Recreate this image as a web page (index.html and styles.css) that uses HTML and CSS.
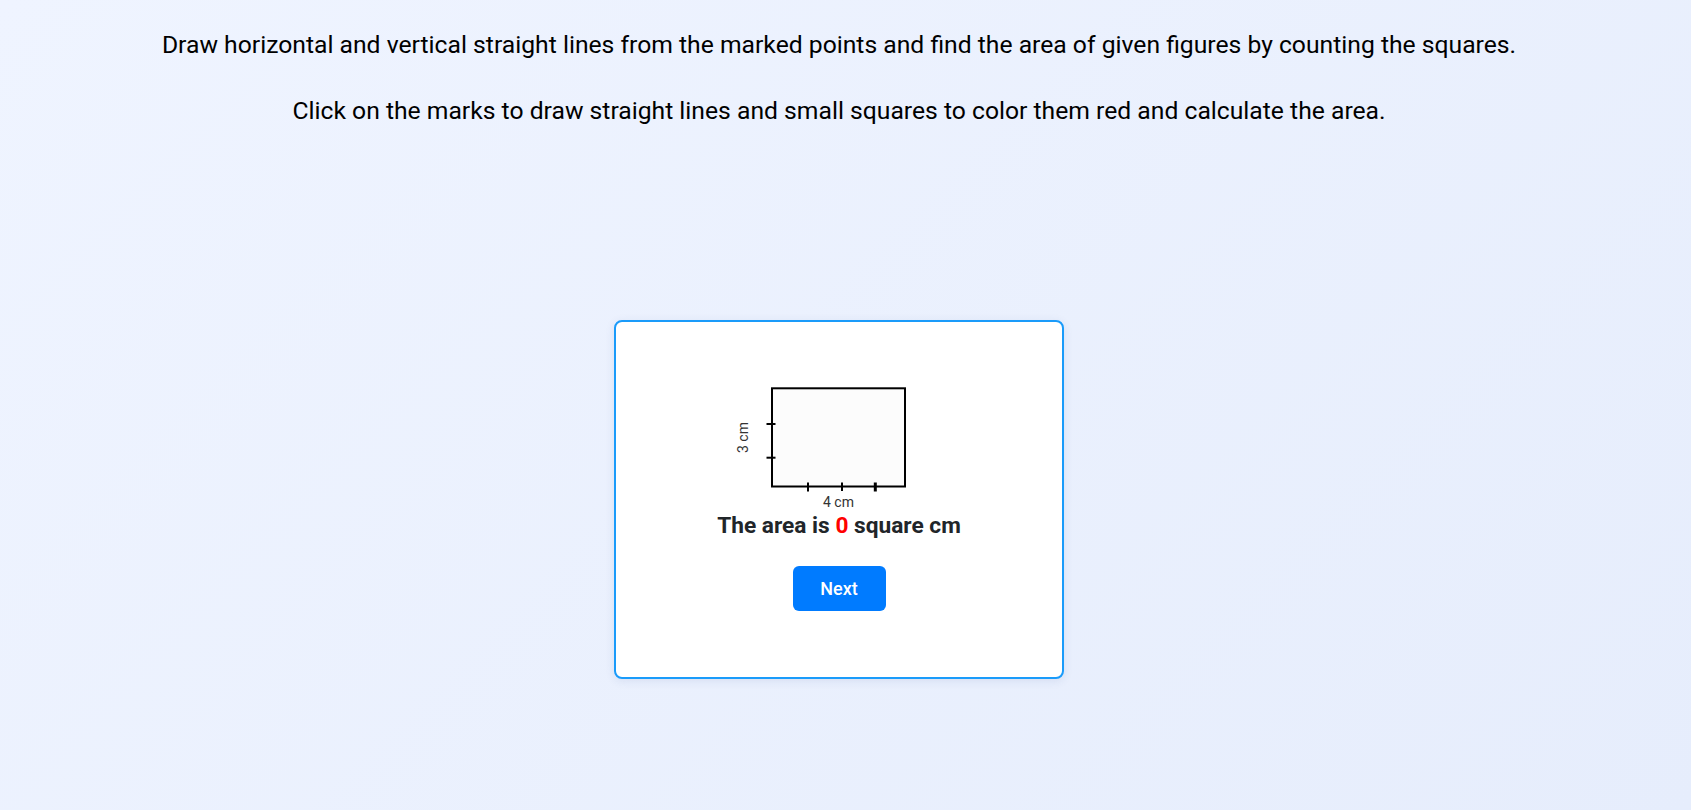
FILE: index.html
```html
<!DOCTYPE html>
<html lang="en">
<head>
<meta charset="utf-8">
<title>Area by counting squares</title>
<link rel="stylesheet" href="styles.css">
</head>
<body>
<main class="page">
  <section class="instructions">
    <p class="line">Draw horizontal and vertical straight lines from the marked points and find the area of given figures by counting the squares.</p>
    <p class="line">Click on the marks to draw straight lines and small squares to color them red and calculate the area.</p>
  </section>
  <section class="card">
    <svg class="figure" width="240" height="133" viewBox="0 0 240 133" xmlns="http://www.w3.org/2000/svg">
      <rect x="53" y="8.3" width="133" height="98.2" fill="#fcfcfc" stroke="#000" stroke-width="2"/>
      <line x1="89" y1="102.5" x2="89" y2="111.5" stroke="#000" stroke-width="2"/>
      <line x1="123" y1="102.5" x2="123" y2="111" stroke="#000" stroke-width="2"/>
      <line x1="156.3" y1="102.5" x2="156.3" y2="111.5" stroke="#000" stroke-width="3"/>
      <line x1="47.5" y1="44" x2="56.5" y2="44" stroke="#000" stroke-width="2"/>
      <line x1="47.5" y1="77.7" x2="56.5" y2="77.7" stroke="#000" stroke-width="2"/>
      <text class="dim dim-v" x="0" y="0" transform="translate(24 57.5) rotate(-90)" text-anchor="middle">3 cm</text>
      <text class="dim" x="119.5" y="126.5" text-anchor="middle">4 cm</text>
    </svg>
    <p class="area">The area is <span class="value">0</span> square cm</p>
    <button class="next" type="button">Next</button>
  </section>
</main>
</body>
</html>
```

FILE: styles.css
```css
html, body {
  margin: 0;
  padding: 0;
}

body {
  min-height: 100vh;
  background: linear-gradient(135deg, #eff4ff 0%, #e6edfc 100%);
  font-family: Roboto, "Liberation Sans", Arial, sans-serif;
  color: #000;
}

.page {
  display: flex;
  flex-direction: column;
  align-items: center;
  padding: 29.8px 13px 0 0;
  box-sizing: border-box;
  min-height: 100vh;
}

.instructions {
  display: flex;
  flex-direction: column;
  align-items: center;
  gap: 37.3px;
  text-align: center;
}

.line {
  margin: 0;
  font-size: 24.7px;
  line-height: 29px;
  font-weight: 400;
  white-space: nowrap;
}

.card {
  margin-top: 195.3px;
  width: 450px;
  box-sizing: border-box;
  background: #fff;
  border: 2px solid #1a9bfa;
  border-radius: 8px;
  box-shadow: 0 2px 10px rgba(40, 70, 140, 0.10);
  padding: 57.6px 0 66.2px;
  display: flex;
  flex-direction: column;
  align-items: center;
}

.figure {
  display: block;
}

.dim {
  font-family: Roboto, "Liberation Sans", Arial, sans-serif;
  font-size: 14px;
  fill: #333;
}

.dim-v {
  dominant-baseline: central;
}

.area {
  margin: 0;
  font-size: 22.7px;
  line-height: 26.6px;
  font-weight: 700;
  color: #212529;
}

.value {
  color: #ff0000;
}

.next {
  margin-top: 26.7px;
  width: 93px;
  height: 45px;
  padding: 0;
  border: none;
  border-radius: 6px;
  background: #007bff;
  color: #fff;
  font-family: Roboto, "Liberation Sans", Arial, sans-serif;
  font-size: 18px;
  font-weight: 500;
  line-height: 21px;
  cursor: pointer;
}
```
